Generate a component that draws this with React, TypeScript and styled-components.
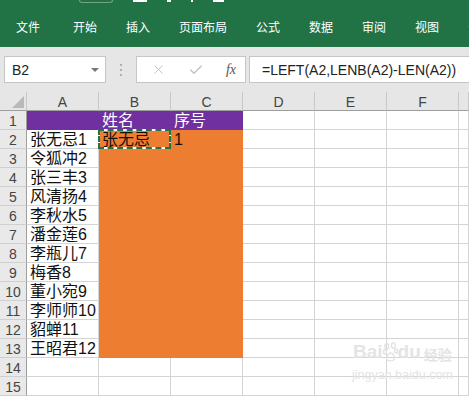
import styled, { createGlobalStyle } from "styled-components";
import { X, Check } from "lucide-react";

const GlobalStyle = createGlobalStyle`
  html, body {
    margin: 0;
    padding: 0;
    background: #e6e6e6;
    overflow: hidden;
  }
  body {
    font-family: "Liberation Sans", "Noto Sans CJK SC", sans-serif;
  }
`;

const tabs = ["文件", "开始", "插入", "页面布局", "公式", "数据", "审阅", "视图", "开"];
const columns = ["A", "B", "C", "D", "E", "F", ""];
const names = [
    "张无忌1",
    "令狐冲2",
    "张三丰3",
    "风清扬4",
    "李秋水5",
    "潘金莲6",
    "李瓶儿7",
    "梅香8",
    "董小宛9",
    "李师师10",
    "貂蝉11",
    "王昭君12",
];

type Fill = "purple" | "orange" | undefined;

function fillFor(row: number, col: number): Fill {
    if (row === 1 && col <= 2) return "purple";
    if (row >= 2 && row <= 13 && (col === 1 || col === 2)) return "orange";
    return undefined;
}

function textFor(row: number, col: number): string {
    if (row === 1 && col === 1) return "姓名";
    if (row === 1 && col === 2) return "序号";
    if (row === 2 && col === 1) return "张无忌";
    if (row === 2 && col === 2) return "1";
    if (col === 0 && row >= 2 && row <= 13) return names[row - 2];
    return "";
}

export default function App() {
    const rows = Array.from({ length: 15 }, (_, i) => i + 1);
    return (
        <Page>
            <GlobalStyle />
            <Ribbon>
                <QuickBar>
                    <QuickPill />
                    <QuickMark $w={14} />
                    <QuickMark $w={4} />
                    <QuickMark $w={2} />
                    <QuickMark $w={11} />
                </QuickBar>
                <Tabs>
                    {tabs.map((t, i) => (
                        <Tab key={i} $first={i === 0}>
                            {t}
                        </Tab>
                    ))}
                </Tabs>
            </Ribbon>

            <FormulaBar>
                <NameBox>
                    <span>B2</span>
                    <DropArrow />
                </NameBox>
                <Grip>
                    <i />
                    <i />
                    <i />
                </Grip>
                <FxBox>
                    <X size={15} strokeWidth={1.6} />
                    <Check size={16} strokeWidth={2} />
                    <Fx>fx</Fx>
                </FxBox>
                <FormulaInput>=LEFT(A2,LENB(A2)-LEN(A2))</FormulaInput>
            </FormulaBar>

            <Sheet>
                <Corner>
                    <svg width="12" height="12" viewBox="0 0 12 12">
                        <polygon points="12,0 12,12 0,12" fill="#b9b9b9" />
                    </svg>
                </Corner>
                {columns.map((c, i) => (
                    <ColHead key={c + i}>{c}</ColHead>
                ))}
                {rows.map((r) => (
                    <Row key={r} r={r} />
                ))}
                <Watermark>
                    <WmTop>
                        <span>Bai</span>
                        <svg width="15" height="22" viewBox="0 0 16 22">
                            <g fill="none" stroke="#e2e2e2" strokeWidth="1.5">
                                <ellipse cx="4" cy="5" rx="2" ry="3" />
                                <ellipse cx="11" cy="4" rx="2" ry="3" />
                                <ellipse cx="2" cy="11" rx="1.6" ry="2.2" />
                                <ellipse cx="14" cy="10" rx="1.6" ry="2.2" />
                                <path d="M4 19 C3 15 6 12 8 12 C10 12 13 15 12 19 C11 21 5 21 4 19 Z" />
                            </g>
                        </svg>
                        <span>du</span>
                        <WmCn>经验</WmCn>
                    </WmTop>
                    <WmUrl>jingyan.baidu.com</WmUrl>
                </Watermark>
            </Sheet>
        </Page>
    );
}

function Row({ r }: { r: number }) {
    return (
        <>
            <RowHead>{r}</RowHead>
            {columns.map((_, c) => {
                const fill = fillFor(r, c);
                return (
                    <Cell key={c} $fill={fill}>
                        {textFor(r, c)}
                        {r === 2 && c === 1 && <Marquee />}
                    </Cell>
                );
            })}
        </>
    );
}

const Page = styled.div`
    width: 469px;
    height: 396px;
    overflow: hidden;
    display: flex;
    flex-direction: column;
    background: #e6e6e6;
`;

const Ribbon = styled.div`
    height: 50px;
    background: #217346;
    display: flex;
    flex-direction: column;
`;

const QuickBar = styled.div`
    height: 3px;
    display: flex;
    align-items: flex-start;
    padding-left: 79px;
    gap: 20px;
`;

const QuickPill = styled.div`
    width: 32px;
    height: 2px;
    border: 1px solid #6fa386;
    border-top: none;
    border-radius: 0 0 6px 6px;
`;

const QuickMark = styled.div<{ $w: number }>`
    width: ${(p) => p.$w}px;
    height: 2px;
    background: #ffffff;
`;

const Tabs = styled.div`
    flex: 1;
    display: flex;
    align-items: center;
    padding: 2px 0 0 16px;
    gap: 29px;
    white-space: nowrap;
`;

const Tab = styled.span<{ $first?: boolean }>`
    color: #ffffff;
    font-family: "Noto Sans CJK SC", sans-serif;
    font-size: 12px;
    margin-right: ${(p) => (p.$first ? 4 : 0)}px;
`;

const FormulaBar = styled.div`
    height: 47px;
    display: flex;
    align-items: center;
    padding: 0 0 0 4px;
    box-sizing: border-box;
`;

const Box = styled.div`
    height: 27px;
    background: #ffffff;
    border: 1px solid #c6c6c6;
    box-sizing: border-box;
    display: flex;
    align-items: center;
`;

const NameBox = styled(Box)`
    width: 102px;
    padding: 0 6px 0 7px;
    justify-content: space-between;
    font-size: 14px;
    color: #222;
`;

const DropArrow = styled.div`
    width: 0;
    height: 0;
    border-left: 4px solid transparent;
    border-right: 4px solid transparent;
    border-top: 4px solid #777;
`;

const Grip = styled.div`
    width: 30px;
    display: flex;
    flex-direction: column;
    align-items: center;
    gap: 3px;
    i {
        width: 2px;
        height: 2px;
        background: #b0b0b0;
    }
`;

const FxBox = styled(Box)`
    width: 110px;
    padding: 0 9px 0 14px;
    justify-content: space-between;
    color: #c2c2c2;
`;

const Fx = styled.span`
    font-family: "Liberation Serif", serif;
    font-style: italic;
    font-size: 14px;
    color: #555;
`;

const FormulaInput = styled(Box)`
    flex: 1;
    margin-left: 3px;
    padding-left: 12px;
    font-size: 14px;
    color: #222;
    border-right: none;
`;

const Sheet = styled.div`
    position: relative;
    display: grid;
    grid-template-columns: 27px repeat(6, 72px) 1fr;
    grid-auto-rows: 19px;
    background: #ffffff;
`;

const HeadBase = styled.div`
    background: #e6e6e6;
    box-sizing: border-box;
    display: flex;
    align-items: center;
    justify-content: center;
    color: #444;
    font-size: 14px;
`;

const Corner = styled(HeadBase)`
    justify-content: flex-end;
    align-items: flex-end;
    padding: 0 2px 2px 0;
    border-right: 1px solid #c8c8c8;
    border-bottom: 1px solid #9e9e9e;
`;

const ColHead = styled(HeadBase)`
    border-right: 1px solid #c8c8c8;
    border-bottom: 1px solid #9e9e9e;
    padding-top: 2px;
`;

const RowHead = styled(HeadBase)`
    background: #e9e9e9;
    border-right: 1px solid #9e9e9e;
    border-bottom: 1px solid #cfcfcf;
    padding-top: 1px;
`;

const fills = {
    purple: "#7030a0",
    orange: "#ed7d31",
};

const Cell = styled.div<{ $fill?: Fill }>`
    position: relative;
    box-sizing: border-box;
    background: ${(p) => (p.$fill ? fills[p.$fill] : "#ffffff")};
    border-right: 1px solid ${(p) => (p.$fill ? fills[p.$fill] : "#d4d4d4")};
    border-bottom: 1px solid ${(p) => (p.$fill ? fills[p.$fill] : "#d4d4d4")};
    color: ${(p) => (p.$fill === "purple" ? "#ffffff" : "#111")};
    font-family: "Liberation Sans", "Noto Sans CJK SC", sans-serif;
    font-size: 16px;
    line-height: 19px;
    padding-left: 3px;
    white-space: nowrap;
    overflow: visible;
`;

const Marquee = styled.div`
    position: absolute;
    left: -1px;
    top: -1px;
    right: -1px;
    bottom: -1px;
    border: 2px solid #ffffff;
    &::after {
        content: "";
        position: absolute;
        inset: -2px;
        border: 2px dashed #217346;
    }
`;

const Watermark = styled.div`
    position: absolute;
    left: 352px;
    top: 249px;
    display: flex;
    flex-direction: column;
    align-items: center;
    pointer-events: none;
    color: #e4e4e4;
    white-space: nowrap;
`;

const WmTop = styled.div`
    display: flex;
    align-items: flex-end;
    font-family: "Liberation Sans", sans-serif;
    font-weight: 700;
    font-size: 19px;
    line-height: 22px;
`;

const WmCn = styled.span`
    font-family: "Noto Sans CJK SC", sans-serif;
    font-size: 14px;
    line-height: 18px;
    margin-left: 3px;
`;

const WmUrl = styled.div`
    font-family: "Liberation Sans", sans-serif;
    font-size: 12.5px;
    margin-top: 5px;
`;
